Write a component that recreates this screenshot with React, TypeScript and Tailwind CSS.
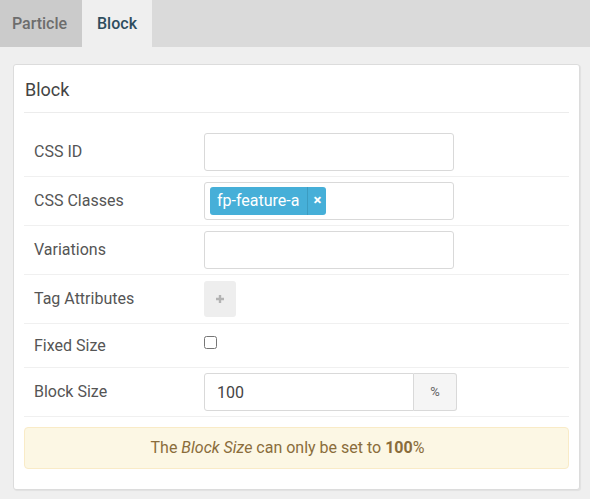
import { useState } from 'react'

const font = { fontFamily: 'Roboto, "Liberation Sans", sans-serif' }

function Row({ label, children, h = 'h-[49px]' }: { label: string; children: React.ReactNode; h?: string }) {
  return (
    <div className={`flex items-center ${h} border-b border-[#f0f0f0]`}>
      <div className="w-[180px] pl-[10px] text-[16px] text-[#555]">{label}</div>
      <div className="flex-1">{children}</div>
    </div>
  )
}

export default function App() {
  const [fixed, setFixed] = useState(false)

  return (
    <div className="w-[590px] h-[499px] bg-[#efefef]" style={font}>
      <div className="flex h-[47px] bg-[#dadada]">
        <div className="w-[82px] flex items-center justify-center pr-[3px] bg-[#cbcbcb] text-[16px] font-medium text-[#6d6d6d]">
          Particle
        </div>
        <div className="w-[70px] flex items-center justify-center bg-[#efefef] text-[16px] font-medium text-[#2e4d5e]">
          Block
        </div>
      </div>

      <div className="pt-[17px] pl-[13px] pr-[10px]">
        <div className="bg-white border border-[#dcdcdc] rounded-[3px] shadow-[1px_1px_1px_rgba(0,0,0,0.06)] px-[10px] pb-[20px]">
          <div className="h-[48px] flex items-center pl-px pt-px text-[18px] text-[#444] border-b border-[#ececec]">
            Block
          </div>

          <div className="pt-[15px]">
            <Row label="CSS ID">
              <input className="w-[250px] h-[38px] border border-[#d9d9d9] rounded-[3px] outline-none px-3" />
            </Row>
            <Row label="CSS Classes">
              <div className="w-[250px] h-[38px] border border-[#d9d9d9] rounded-[3px] flex items-center px-[5px]">
                <span className="flex items-center h-[28px] bg-[#46afd8] rounded-[3px] text-white text-[16px]">
                  <span className="pl-[7px] pr-[8px] pb-px">fp-feature-a</span>
                  <span className="h-full w-px bg-[#3c9cc1]" />
                  <span className="px-[5px] text-[15px] font-bold leading-none pb-px">×</span>
                </span>
              </div>
            </Row>
            <Row label="Variations">
              <input className="w-[250px] h-[38px] border border-[#d9d9d9] rounded-[3px] outline-none px-3" />
            </Row>
            <Row label="Tag Attributes">
              <button className="w-[32px] h-[36px] bg-[#eeeeee] rounded-[3px] flex items-center justify-center">
                <svg width="10" height="10" viewBox="0 0 10 10">
                  <path d="M5 1v8M1 5h8" stroke="#b3b3b3" strokeWidth="2.4" />
                </svg>
              </button>
            </Row>
            <Row label="Fixed Size" h="h-[44px]">
              <div className="pb-[7px]">
                <input
                  type="checkbox"
                  checked={fixed}
                  onChange={() => setFixed(!fixed)}
                  className="block w-[13px] h-[13px] m-0"
                />
              </div>
            </Row>
            <Row label="Block Size">
              <div className="flex w-[253px] h-[38px]">
                <input
                  defaultValue="100"
                  className="w-[210px] h-full border border-[#d9d9d9] rounded-l-[3px] outline-none px-[12px] text-[16px] text-[#444]"
                />
                <div className="w-[43px] h-full bg-[#f5f5f5] border border-l-0 border-[#d9d9d9] rounded-r-[3px] flex items-center justify-center text-[13px] text-[#666]">
                  %
                </div>
              </div>
            </Row>
          </div>

          <div className="mt-[10px] h-[42px] bg-[#fcf7e4] border border-[#f9ebc7] rounded-[4px] flex items-center justify-center pr-[18px] text-[16px] text-[#8a6d3b]">
            <span>
              The <em>Block Size</em> can only be set to <strong>100</strong>%
            </span>
          </div>
        </div>
      </div>
    </div>
  )
}
